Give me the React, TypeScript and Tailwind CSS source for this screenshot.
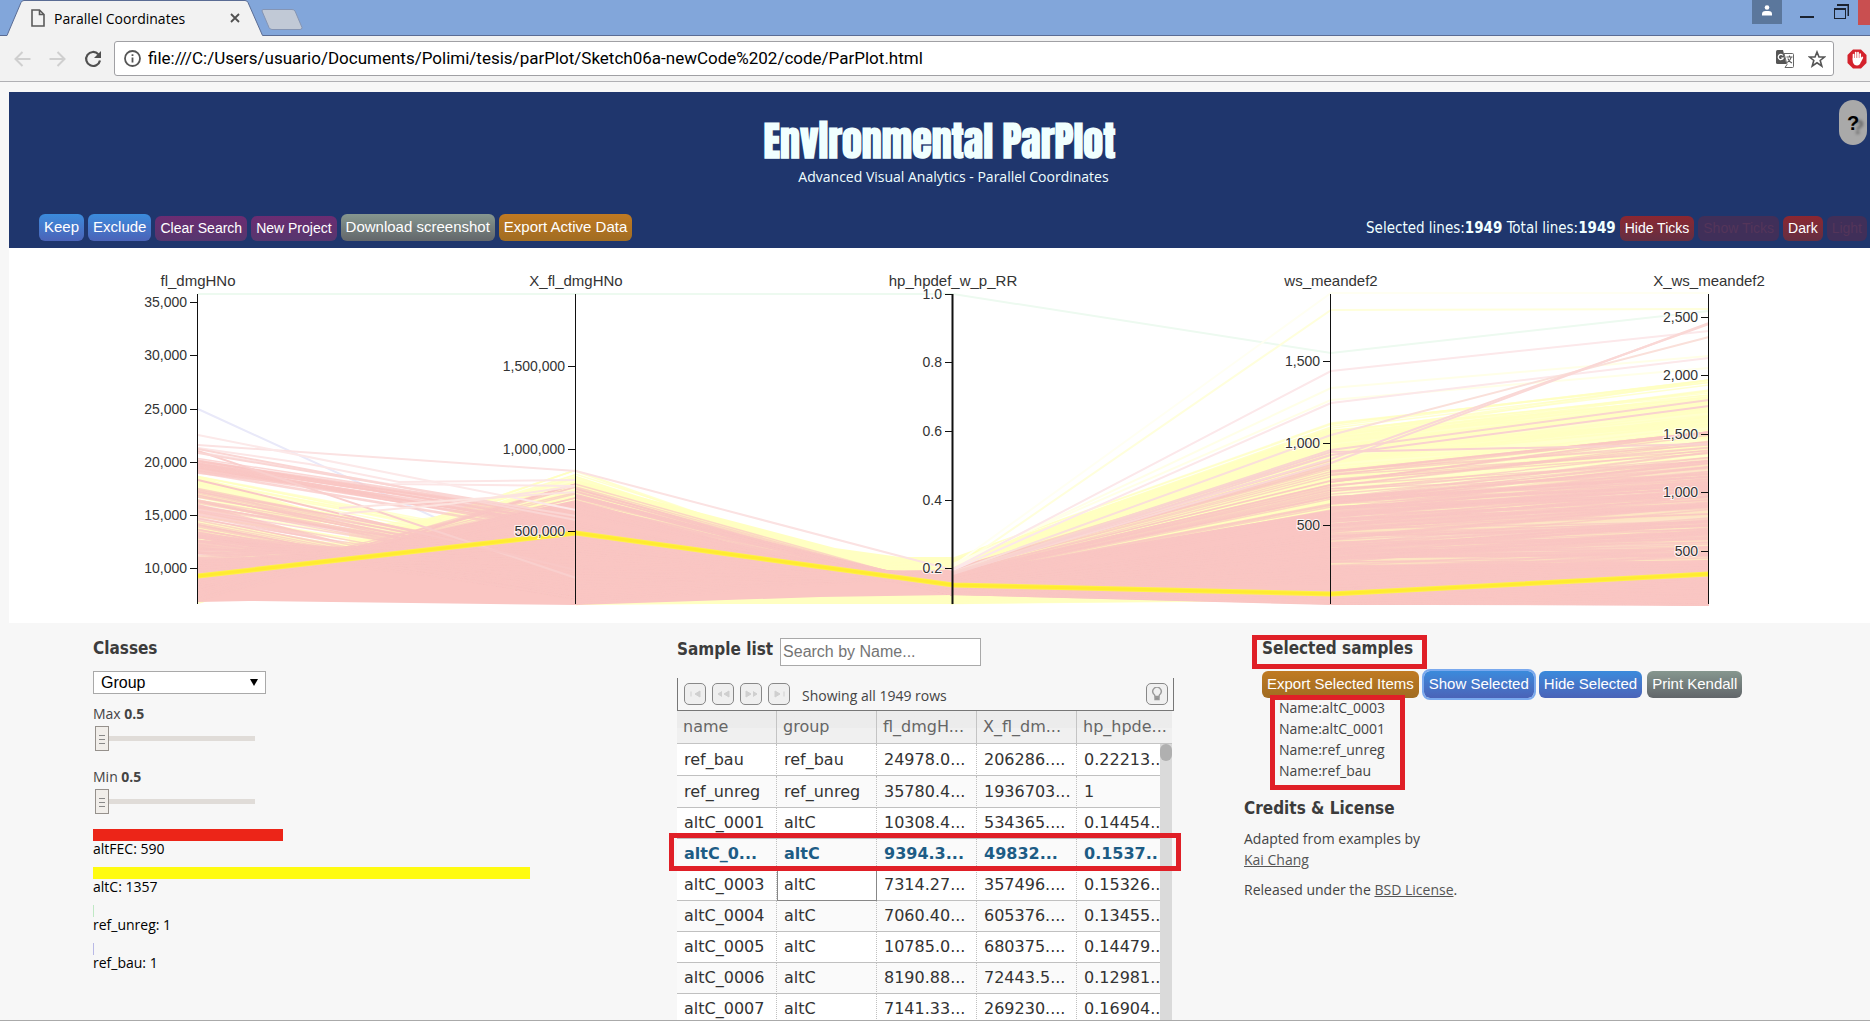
import React from "react";

type Pt = [number, number];

const AXES = [
  { name: "fl_dmgHNo", x: 189, wide: false, ticks: [["35,000", 54], ["30,000", 107], ["25,000", 161], ["20,000", 214], ["15,000", 267], ["10,000", 320]] },
  { name: "X_fl_dmgHNo", x: 567, wide: false, ticks: [["1,500,000", 118], ["1,000,000", 201], ["500,000", 283]] },
  { name: "hp_hpdef_w_p_RR", x: 944, wide: true, ticks: [["1.0", 46], ["0.8", 114], ["0.6", 183], ["0.4", 252], ["0.2", 320]] },
  { name: "ws_meandef2", x: 1322, wide: false, ticks: [["1,500", 113], ["1,000", 195], ["500", 277]] },
  { name: "X_ws_meandef2", x: 1700, wide: false, ticks: [["2,500", 69], ["2,000", 127], ["1,500", 186], ["1,000", 244], ["500", 303]] },
] as { name: string; x: number; wide: boolean; ticks: [string, number][] }[];

const X = AXES.map((a) => a.x);
const YELLOW = "#ffffc2";
const RED = "#fac6c3";

function random(seed: number) {
  let s = seed;
  return () => {
    s = (s * 1664525 + 1013904223) % 4294967296;
    return s / 4294967296;
  };
}

/** Sample lines of one class between two neighbouring axes. */
function bundle(seed: number, segment: number, count: number, left: Pt, right: Pt, correlation: number, noise: number, bias = 1) {
  const rnd = random(seed);
  const out: string[] = [];
  for (let i = 0; i < count; i++) {
    const u = Math.pow(rnd(), bias);
    const base = correlation > 0 ? u : 1 - u;
    const v = Math.min(1, Math.max(0, base + (rnd() - 0.5) * noise));
    const y1 = left[0] + (left[1] - left[0]) * u;
    const y2 = right[0] + (right[1] - right[0]) * v;
    out.push(`M${X[segment]} ${y1.toFixed(1)}L${X[segment + 1]} ${y2.toFixed(1)}`);
  }
  return out;
}

const yellowLines = [
  ...bundle(11, 0, 40, [226, 300], [300, 352], 1, 0.35),
  ...bundle(12, 0, 60, [300, 356], [222, 300], -1, 0.5),
  ...bundle(13, 1, 120, [222, 357], [310, 356], -1, 0.4),
  ...bundle(14, 2, 160, [310, 356], [174, 352], 1, 0.1),
  ...bundle(15, 3, 170, [174, 356], [132, 350], 1, 0.16),
];

const redLines = [
  ...bundle(21, 0, 26, [210, 226], [268, 288], 1, 0.7),
  ...bundle(22, 0, 40, [240, 290], [312, 352], 1, 0.6),
  ...bundle(23, 0, 120, [284, 353], [236, 350], -1, 0.45),
  ...bundle(24, 1, 150, [236, 356], [322, 347], -1, 0.5),
  ...bundle(25, 2, 110, [320, 347], [206, 357], 1, 0.06, 0.75),
  ...bundle(26, 3, 230, [222, 357], [184, 357], 1, 0.22, 0.8),
];

const backLines: [string, string][] = [
  ["#edfaf0", `M${X[0]} 46H${X[2]}L${X[3]} 105L${X[4]} 63`],
  ["#e9e9f9", `M${X[0]} 161L${X[1]} 334`],
];

const strayLines: [string, string][] = [
  ["#ffffdc", `M${X[2]} 322L${X[3]} 62L${X[4]} 61`],
  ["#fffff2", `M${X[2]} 318L${X[3]} 45H${X[4]}`],
  ["#ffffe8", `M${X[2]} 318L${X[3]} 140L${X[4]} 108`],
  ["#ffffe8", `M${X[2]} 316L${X[3]} 152L${X[4]} 120`],
  ["#fce8ea", `M${X[2]} 321L${X[3]} 123L${X[4]} 83`],
  ["#fce8ea", `M${X[2]} 322L${X[3]} 155L${X[4]} 110`],
  ["#fbe2e2", `M${X[0]} 197L${X[1]} 223L${X[2]} 322`],
  ["#fce6e6", `M${X[0]} 200L300 216L390 234L${X[1]} 232`],
  ["#fce6e6", `M${X[0]} 204L380 236L${X[1]} 238`],
  ["#fce9e9", `M${X[0]} 187L${X[1]} 262`],
  ["#fad6d4", `M${X[0]} 201L${X[1]} 272`],
  ["#f9cfcd", `M${X[0]} 203L${X[1]} 330`],
  ["#fad6d4", `M${X[0]} 205L${X[1]} 268`],
  ["#f9c8c6", `M${X[0]} 232L${X[1]} 322`],
  ["#fce4e0", `M330 266L440 256L${X[1]} 238`],
  ["#fce4e0", `M330 260L${X[1]} 244`],
  ["#fae0da", `M${X[2]} 324L${X[3]} 187L${X[4]} 89`],
  ["#fad8d6", `M${X[2]} 324L${X[3]} 211L${X[4]} 76`],
  ["#fad8d6", `M${X[2]} 325L${X[3]} 215L${X[4]} 75`],
  ["#f9d2d0", `M${X[2]} 325L${X[3]} 204L${X[4]} 196`],
  ["#f9d6cf", `M${X[2]} 325L${X[3]} 202L${X[4]} 152`],
  ["#f9d2d0", `M${X[2]} 326L${X[3]} 207L${X[4]} 158`],
];

function ParallelPlot() {
  return (
    <svg viewBox="0 0 1861 375" className="block w-full bg-white font-['Liberation_Sans',sans-serif]" role="img" aria-label="Parallel coordinates plot">
      <g fill="none" strokeWidth="2">
        {backLines.map(([c, d], i) => <path key={i} d={d} stroke={c} />)}
      </g>
      <g fill={YELLOW}>
        <path d={`M${X[1]} 232L826 300L891 309H${X[2]}V356H700L${X[1]} 357Z`} />
        <path d={`M${X[2]} 311L${X[3]} 180V352L${X[2]} 356Z`} />
        <path d={`M${X[3]} 184L${X[4]} 150V330L${X[3]} 350Z`} fillOpacity="0.8" />
        <path d={`M${X[0]} 228L320 268L310 276L${X[0]} 250ZM${X[0]} 272L330 296L${X[0]} 300Z`} fillOpacity="0.9" />
        <path d={`M340 280L460 264L${X[1]} 228V300H340Z`} fillOpacity="0.7" />
      </g>
      <g stroke={YELLOW} strokeWidth="1.5" strokeOpacity="0.75">
        {yellowLines.map((d, i) => <path key={i} d={d} />)}
      </g>
      <g fill={RED}>
        <path d={`M${X[0]} 312L330 304L400 288L${X[1]} 252V357L240 353L${X[0]} 354Z`} />
        <path d={`M${X[0]} 214L260 228L${X[1]} 276L560 284L400 250L${X[0]} 226Z`} fillOpacity="0.6" />
        <path d={`M${X[0]} 256L340 296L${X[0]} 268Z`} fillOpacity="0.8" />
        <path d={`M${X[1]} 252L800 316L${X[2]} 330V347L811 349L${X[1]} 357Z`} />
        <path d={`M${X[2]} 324L1040 310L${X[3]} 262V357L${X[2]} 347Z`} />
        <path d={`M${X[3]} 264L${X[4]} 210V357H${X[3]}Z`} fillOpacity="0.45" />
        <path d={`M${X[3]} 318L${X[4]} 312V357H${X[3]}Z`} />
      </g>
      <g stroke={RED} strokeWidth="1.5" strokeOpacity="0.7">
        {redLines.map((d, i) => <path key={i} d={d} />)}
      </g>
      <g fill="none" strokeWidth="2">
        {strayLines.map(([c, d], i) => <path key={i} d={d} stroke={c} />)}
      </g>
      <path d={`M${X[0]} 328L${X[1]} 285L${X[2]} 337L${X[3]} 346L${X[4]} 326`} fill="none" stroke="#fff04a" strokeWidth="5" />
      <path d={`M${X[0]} 328L${X[1]} 285L${X[2]} 337L${X[3]} 346L${X[4]} 326`} fill="none" stroke="#ffeb30" strokeWidth="3" />
      {AXES.map((a) => (
        <g key={a.name}>
          <path d={`M${a.x - 0.5} 46V356`} stroke="#111" strokeWidth={a.wide ? 2 : 1} />
          <path d={a.ticks.map(([, y]) => `M${a.x - 8} ${y + 0.5}H${a.x}`).join("")} stroke="#111" />
          <g fill="#333" stroke="#fff" strokeWidth="2" strokeOpacity="0.8" paintOrder="stroke">
            <text x={a.x} y="38" textAnchor="middle" fontSize="15">{a.name}</text>
            {a.ticks.map(([t, y]) => (
              <text key={t} x={a.x - 11} y={y + 5} textAnchor="end" fontSize="14">{t}</text>
            ))}
          </g>
        </g>
      ))}
    </svg>
  );
}

const BLUE = "bg-linear-to-b from-[#3a8bdc] to-[#4a63b8]";
const PURPLE = "bg-linear-to-b from-[#6b2c72] to-[#55366e]";
const GREY = "bg-linear-to-b from-[#86978f] to-[#62666a]";
const ORANGE = "bg-linear-to-b from-[#c07a22] to-[#a06c22] text-[#fdf0c8]";
const MAROON = "bg-linear-to-b from-[#8c2630] to-[#632e42]";

function Btn({ tone, small, className = "", disabled, children }: { tone: string; small?: boolean; className?: string; disabled?: boolean; children: string }) {
  const size = small ? "h-[25px] px-[5px] text-[14px]" : "h-[27px] px-[5px] text-[15px]";
  return (
    <button type="button" disabled={disabled} className={`shrink-0 whitespace-nowrap rounded-[6px] font-['Liberation_Sans',sans-serif] text-white ${size} ${tone} ${className}`}>
      {children}
    </button>
  );
}

function BrowserBar() {
  return (
    <div>
      <div className="flex h-[36px] items-start border-b border-[#5a6c94] bg-[#82a6da]">
        <div className="relative ml-[7px] flex h-[36px] w-[256px] shrink-0 items-center pl-[24px]">
          <svg viewBox="0 0 256 36" className="absolute inset-0 h-[36px] w-[256px]" aria-hidden="true">
            <path d="M0 35.5L14 2.500Q15 .5 17 .5H238Q240 .5 241 2.500L255.500 35.500V36H0Z" fill="#f2f2f2" />
            <path d="M0 35.5L14 2.500Q15 .5 17 .5H238Q240 .5 241 2.500L255.500 35.500" fill="none" stroke="#5a6c94" />
          </svg>
          <svg viewBox="0 0 14 18" className="relative h-[18px] w-[14px]" fill="none" stroke="#5a5a5a" strokeWidth="1.600" aria-hidden="true">
            <path d="M1 1H8.500L13 5.500V17H1ZM8.500 1V5.500H13" />
          </svg>
          <span className="relative ml-[9px] text-[14px] text-black">Parallel Coordinates</span>
          <button type="button" aria-label="Close tab" className="relative ml-[45px]">
            <svg viewBox="0 0 10 10" className="h-[10px] w-[10px]" stroke="#505050" strokeWidth="1.800"><path d="M1 1L9 9M9 1L1 9" /></svg>
          </button>
        </div>
        <button type="button" aria-label="New tab" className="mt-[9px] -ml-[2px]">
          <svg viewBox="0 0 42 21" className="h-[21px] w-[42px]"><path d="M2 .5H31Q33 .5 34 2L41 18.500Q41 20.500 39 20.500H11Q9 20.500 8 18.500L1 2Q1 .5 2 .5Z" fill="#c1c9d6" stroke="#8595b4" /></svg>
        </button>
        <div className="ml-auto flex shrink-0 items-start">
          <button type="button" aria-label="Profile" className="flex h-[24px] w-[30px] justify-center bg-[#5b779c] pt-[5px]">
            <svg viewBox="0 0 10 11" className="h-[11px] w-[10px]" fill="#fff"><circle cx="5" cy="2.500" r="2.300" /><path d="M0 10.500V9Q0 6 3.500 6H6.500Q10 6 10 9V10.500Z" /></svg>
          </button>
          <button type="button" aria-label="Minimize" className="ml-[18px] mt-[16px] h-[2px] w-[14px] bg-[#1b2330]" />
          <button type="button" aria-label="Restore" className="ml-[20px] mt-[4px]">
            <svg viewBox="0 0 15 15" className="h-[15px] w-[15px]" fill="none" stroke="#1b2330"><path d="M3 1H14.500V12" strokeWidth="2" /><rect x=".5" y="4.500" width="11" height="10" /><path d="M0 5H12" strokeWidth="2" /></svg>
          </button>
          <button type="button" aria-label="Close" className="ml-[9px] h-[25px] w-[12px] bg-[#c94f50]" />
        </div>
      </div>
      <div className="flex h-[46px] items-center border-b border-[#b0b0b4] bg-[#f2f2f2]">
        <button type="button" aria-label="Back" className="ml-[14px]">
          <svg viewBox="0 0 17 16" className="h-[16px] w-[17px]" fill="none" stroke="#cfcfcf" strokeWidth="2"><path d="M16.500 8H2M8.500 1L1.500 8L8.500 15" /></svg>
        </button>
        <button type="button" aria-label="Forward" className="ml-[18px]">
          <svg viewBox="0 0 17 16" className="h-[16px] w-[17px]" fill="none" stroke="#cfcfcf" strokeWidth="2"><path d="M.5 8H15M8.500 1L15.500 8L8.500 15" /></svg>
        </button>
        <button type="button" aria-label="Reload" className="ml-[18px]">
          <svg viewBox="0 0 18 18" className="h-[18px] w-[18px]"><path d="M14.300 4.200A7 7 0 1 0 16 10.500" fill="none" stroke="#505050" strokeWidth="2.200" /><path d="M17 1V8H10Z" fill="#505050" /></svg>
        </button>
        <div className="ml-[12px] flex h-[35px] min-w-0 flex-1 items-center rounded-[3px] border border-[#a0a0a4] bg-white px-[9px]">
          <svg viewBox="0 0 17 17" className="h-[17px] w-[17px] shrink-0" fill="none" stroke="#555" aria-hidden="true"><circle cx="8.500" cy="8.500" r="7.500" strokeWidth="1.800" /><path d="M8.500 7.500V12.500M8.500 4.300V6" strokeWidth="1.800" /></svg>
          <input
            aria-label="Address"
            readOnly
            value="file:///C:/Users/usuario/Documents/Polimi/tesis/parPlot/Sketch06a-newCode%202/code/ParPlot.html"
            className="ml-[7px] min-w-0 flex-1 bg-transparent font-['Roboto',sans-serif] text-[17px] text-black outline-none"
          />
          <button type="button" aria-label="Translate this page" className="shrink-0">
            <svg viewBox="0 0 18 18" className="h-[18px] w-[18px]">
              <path d="M1.500 0H7L10.500 14H1.500Q0 14 0 12.500V1.500Q0 0 1.500 0Z" fill="#555" />
              <path d="M8 3.500H16.500Q17.500 3.500 17.500 4.500V16.500Q17.500 17.500 16.500 17.500H9L11 14.500Z" fill="#fff" stroke="#666" />
              <path d="M7 5.500A2.600 2.600 0 1 0 7.300 8H5.200" fill="none" stroke="#fff" strokeWidth="1.200" />
              <path d="M10.500 7H16.500M13.500 5.500V7M15.300 7Q14.500 10.500 11.200 12.500M11.800 8.500Q13 11.500 16 13" fill="none" stroke="#555" strokeWidth="1.100" />
            </svg>
          </button>
          <button type="button" aria-label="Bookmark this page" className="-mr-[2px] ml-[14px] shrink-0">
            <svg viewBox="0 0 18 18" className="h-[18px] w-[18px]" fill="none" stroke="#555" strokeWidth="1.600"><path d="M9 2L11 7H16.500L12.200 10.500L13.800 16L9 12.800L4.200 16L5.800 10.500L1.500 7H7Z" /></svg>
          </button>
        </div>
        <button type="button" aria-label="Ad blocker" className="ml-[13px] mr-[3px] shrink-0">
          <svg viewBox="0 0 20 20" className="h-[20px] w-[20px]">
            <path d="M6 .5H14L19.500 6V14L14 19.500H6L.5 14V6Z" fill="#d4222c" />
            <path d="M6.500 5.500V11M8.700 3.500V10M11 3.500V10M13.200 5V11M15.300 8.500L13.500 12" stroke="#fff" strokeWidth="1.700" strokeLinecap="round" />
            <path d="M5.800 9H14V12.500Q13 16.500 10 16.500Q7 16.500 5.800 13Z" fill="#fff" />
          </svg>
        </button>
      </div>
    </div>
  );
}

function Header() {
  return (
    <header className="relative bg-[#1f366d] pb-[7px] pt-[28px] text-[#f0ffff]">
      <h1 className="text-center font-['Impact','Anton','Roboto',sans-serif] text-[40px] font-bold leading-[42px]">Environmental ParPlot</h1>
      <p className="mt-[3px] pl-[28px] text-center text-[14px] leading-[24px]">Advanced Visual Analytics - Parallel Coordinates</p>
      <div className="mt-[25px] flex h-[27px] items-end justify-between pl-[30px] pr-[3px]">
        <div className="flex items-end gap-[4px]">
          <Btn tone={BLUE}>Keep</Btn>
          <Btn tone={BLUE}>Exclude</Btn>
          <Btn tone={PURPLE} small>Clear Search</Btn>
          <Btn tone={PURPLE} small>New Project</Btn>
          <Btn tone={GREY}>Download screenshot</Btn>
          <Btn tone={ORANGE}>Export Active Data</Btn>
        </div>
        <div className="flex items-end gap-[4px]">
          <p className="whitespace-nowrap font-['DejaVu_Sans_Condensed','DejaVu_Sans',sans-serif] text-[15px] leading-[26px]">
            Selected lines:<b>1949</b> Total lines:<b>1949</b>
          </p>
          <Btn tone={MAROON} small>Hide Ticks</Btn>
          <Btn tone="bg-[#402f59]" className="!text-[#54355a]" small disabled>Show Ticks</Btn>
          <Btn tone={MAROON} small>Dark</Btn>
          <Btn tone="bg-[#402f59]" className="!text-[#54355a]" small disabled>Light</Btn>
        </div>
      </div>
      <button type="button" aria-label="Help" className="absolute right-[3px] top-[8px] h-[45px] w-[28px] rounded-full bg-[#a9a9a9] font-['Liberation_Sans',sans-serif] text-[20px] font-bold text-black [text-shadow:5px_4px_3px_#666]">
        ?
      </button>
    </header>
  );
}

const GROUPS = [
  { label: "altFEC", count: 590, color: "bg-[#ec2518]" },
  { label: "altC", count: 1357, color: "bg-[#fffb10]" },
  { label: "ref_unreg", count: 1, color: "bg-[#bfe8c4]" },
  { label: "ref_bau", count: 1, color: "bg-[#b9b9e6]" },
];

const H3 = "font-['DejaVu_Sans_Condensed','DejaVu_Sans',sans-serif] text-[17px] font-bold leading-[22px] text-[#3c3c3c]";

function Slider({ label }: { label: string }) {
  const id = `${label.toLowerCase()}-range`;
  return (
    <div className="h-[63px]">
      <label htmlFor={id} className="block text-[14px] leading-[22px]">
        {label} <b>0.5</b>
      </label>
      <input
        id={id}
        type="range"
        min={0}
        max={1}
        step={0.1}
        defaultValue={0}
        className="ml-[2px] mt-[1px] block h-[25px] w-[160px] appearance-none bg-transparent [&::-webkit-slider-runnable-track]:h-[5px] [&::-webkit-slider-runnable-track]:bg-[#e0dcd8] [&::-webkit-slider-thumb]:mt-[-10px] [&::-webkit-slider-thumb]:h-[25px] [&::-webkit-slider-thumb]:w-[14px] [&::-webkit-slider-thumb]:appearance-none [&::-webkit-slider-thumb]:border [&::-webkit-slider-thumb]:border-[#96918c] [&::-webkit-slider-thumb]:[background:linear-gradient(#888,#888)_3px_8px/6px_1px_no-repeat,linear-gradient(#888,#888)_3px_12px/6px_1px_no-repeat,linear-gradient(#888,#888)_3px_16px/6px_1px_no-repeat,#f1eeea]"
      />
    </div>
  );
}

function Classes() {
  return (
    <section className="pt-[14px]">
      <h3 className={H3}>Classes</h3>
      <div className="relative mt-[12px] w-[173px]">
        <select aria-label="Class variable" className="block h-[23px] w-full appearance-none border border-[#a9a9a9] bg-white pl-[7px] font-['Liberation_Sans',sans-serif] text-[16px] leading-[20px] text-black">
          <option>Group</option>
        </select>
        <svg viewBox="0 0 8 7" className="pointer-events-none absolute right-[8px] top-[8px] h-[7px] w-[8px]" aria-hidden="true"><path d="M0 0H8L4 7Z" fill="#000" /></svg>
      </div>
      <div className="mt-[9px]">
        <Slider label="Max" />
        <Slider label="Min" />
      </div>
      <ul className="text-[14px] text-black">
        {GROUPS.map((g) => (
          <li key={g.label} className="h-[38px]">
            <div className={`h-[12px] ${g.color}`} style={{ width: `${Math.max(1, Math.round(g.count * 0.322))}px` }} />
            <div className="leading-[15px]">{g.label}: {g.count}</div>
          </li>
        ))}
      </ul>
    </section>
  );
}

const COLS = ["name", "group", "fl_dmgH...", "X_fl_dm...", "hp_hpde..."];
const ROWS = [
  ["ref_bau", "ref_bau", "24978.0...", "206286....", "0.22213.."],
  ["ref_unreg", "ref_unreg", "35780.4...", "1936703...", "1"],
  ["altC_0001", "altC", "10308.4...", "534365....", "0.14454.."],
  ["altC_0...", "altC", "9394.3...", "49832...", "0.1537.."],
  ["altC_0003", "altC", "7314.27...", "357496....", "0.15326.."],
  ["altC_0004", "altC", "7060.40...", "605376....", "0.13455.."],
  ["altC_0005", "altC", "10785.0...", "680375....", "0.14479.."],
  ["altC_0006", "altC", "8190.88...", "72443.5...", "0.12981.."],
  ["altC_0007", "altC", "7141.33...", "269230....", "0.16904.."],
];

const PAGER: [string, string][] = [
  ["First page", "M2 2.500V7.500M11 2L6 5L11 8Z"],
  ["Previous page", "M5 2.500L1 5L5 7.500M12 2L7 5L12 8Z"],
  ["Next page", "M1 2L6 5L1 8ZM8 2.500L12 5L8 7.500"],
  ["Last page", "M2 2L7 5L2 8ZM11 2.500V7.500"],
];

function SampleList() {
  return (
    <section className="w-[497px] pt-[15px]">
      <div className="flex h-[28px]">
        <label htmlFor="search" className={`${H3} mr-[7px]`}>Sample list</label>
        <input id="search" placeholder="Search by Name..." className="h-[28px] w-[201px] border border-[#a9a9a9] bg-white px-[2px] font-['Liberation_Sans',sans-serif] text-[16px] placeholder:text-[#757575]" />
      </div>
      <div className="mt-[12px] flex h-[33px] items-center border-x border-b border-[#777] pl-[6px] pr-[5px]">
        <div className="flex gap-[6px]">
          {PAGER.map(([label, d]) => (
            <button key={label} type="button" aria-label={label} className="flex h-[22px] w-[22px] items-center justify-center rounded-[5px] border border-[#888] bg-[#efefef]">
              <svg viewBox="0 0 13 10" className="h-[10px] w-[13px]" fill="#cfcfcf" stroke="#cfcfcf"><path d={d} /></svg>
            </button>
          ))}
        </div>
        <span className="ml-[12px] mt-[3px] whitespace-nowrap text-[14px]">Showing all 1949 rows</span>
        <button type="button" aria-label="Toggle search panel" className="ml-auto flex h-[22px] w-[22px] items-center justify-center rounded-[5px] border border-[#888] bg-[#f0f0f0]">
          <svg viewBox="0 0 12 14" className="h-[14px] w-[12px]" fill="none" stroke="#999" strokeWidth="1.400"><path d="M4 9.500Q4 8 2.500 6.800A4.200 4.200 0 1 1 9.500 6.800Q8 8 8 9.500Z" /><path d="M4 10.500H8V12.500H4Z" fill="#888" /></svg>
        </button>
      </div>
      <div className="relative w-[495px] font-['DejaVu_Sans',sans-serif] text-[16px]">
        <table className="w-full table-fixed border-separate border-spacing-0">
          <colgroup>
            <col className="w-[100px]" />
            <col className="w-[100px]" />
            <col className="w-[100px]" />
            <col className="w-[100px]" />
            <col />
          </colgroup>
          <thead>
            <tr className="h-[33px] bg-linear-to-b from-[#ececec] from-50% to-[#f0f0f0] to-50% text-[#666]">
              {COLS.map((c) => (
                <th key={c} scope="col" className="whitespace-nowrap border-b border-r border-[#c4c4c4] p-0 pl-[6px] text-left font-normal last:border-r-0">{c}</th>
              ))}
            </tr>
          </thead>
          <tbody className="text-[#333]">
            {ROWS.map((row, r) => {
              const selected = r === 3;
              return (
                <tr key={r} className={`odd:bg-white even:bg-[#fafafa] ${r < 2 ? "h-[32px]" : "h-[31px]"} ${selected ? "font-bold text-[#1d5c85]" : ""}`}>
                  {row.map((cell, c) => (
                    <td
                      key={c}
                      className={`relative whitespace-nowrap border-b border-r p-0 last:border-r-0 ${r === 4 && c === 1 ? "border-l border-[#888] pl-[6px]" : "border-[#c0c0c0] pl-[7px] [border-right-style:dotted]"}`}
                    >
                      {cell}
                      {selected && c === 0 && <span className="pointer-events-none absolute -left-[8px] -top-[6px] z-20 h-[38px] w-[512px] border-[5px] border-[#e01f27]" />}
                    </td>
                  ))}
                </tr>
              );
            })}
          </tbody>
        </table>
        <div className="absolute bottom-0 right-0 top-[33px] z-10 w-[12px] bg-[#dadada]">
          <div className="h-[17px] rounded-full bg-[#b0b0b0]" />
        </div>
      </div>
    </section>
  );
}

function Selected() {
  return (
    <section className="text-[14px] leading-[21px]">
      <div className="pl-[8px] pt-[12px]">
        <h3 className={`${H3} block h-[34px] w-[175px] whitespace-nowrap border-[5px] border-[#e01f27] pl-[5px]`}>
          <span className="-mt-[3px] block">Selected samples</span>
        </h3>
      </div>
      <div className="flex gap-[5px] pl-[18px] pt-[2px] leading-normal">
        <Btn tone={ORANGE}>Export Selected Items</Btn>
        <Btn tone={BLUE} className="outline-2 outline-[#7aa9ee]">Show Selected</Btn>
        <Btn tone={BLUE}>Hide Selected</Btn>
        <Btn tone={GREY}>Print Kendall</Btn>
      </div>
      <div className="relative -mt-[3px] ml-[26px] h-[95px] w-[135px] border-[5px] border-[#e01f27] pl-[4px]">
        <ul className="-mt-[3px]">
          {["altC_0003", "altC_0001", "ref_unreg", "ref_bau"].map((n) => (
            <li key={n}>Name:{n}</li>
          ))}
        </ul>
      </div>
      <h3 className={`${H3} mt-[7px]`}>Credits &amp; License</h3>
      <p className="mt-[9px]">
        Adapted from examples by<br />
        <a href="#kai-chang" className="text-[#555] underline">Kai Chang</a>
      </p>
      <p className="mt-[9px]">
        Released under the <a href="#bsd-license" className="text-[#555] underline">BSD License</a>.
      </p>
    </section>
  );
}

export default function App() {
  return (
    <div className="flex h-screen flex-col overflow-hidden border-b border-[#aaa] bg-[#f7f7f7] font-['Open_Sans','Noto_Sans',sans-serif] text-[#444]">
      <BrowserBar />
      <main className="flex min-h-0 flex-1 flex-col pl-[9px] pt-[10px]">
        <Header />
        <ParallelPlot />
        <div className="grid min-h-0 flex-1 grid-cols-[584fr_567fr_626fr] pl-[84px]">
          <Classes />
          <SampleList />
          <Selected />
        </div>
      </main>
    </div>
  );
}
